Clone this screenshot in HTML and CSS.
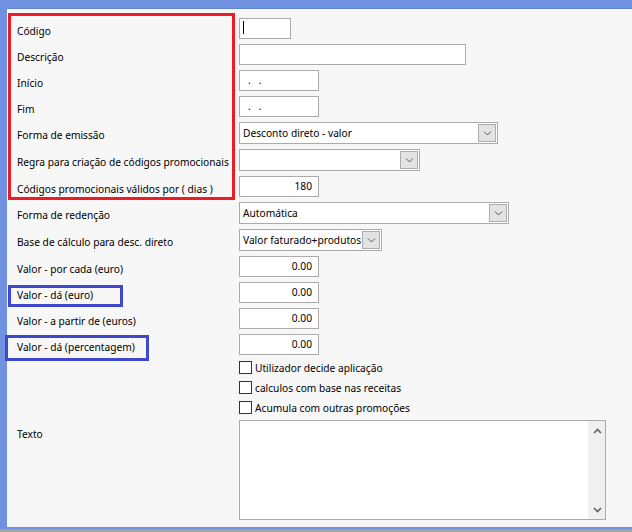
FILE: index.html
```html
<!DOCTYPE html>
<html lang="pt">
<head>
<meta charset="utf-8">
<title>Promoção</title>
<link rel="stylesheet" href="styles.css">
</head>
<body>
<div class="frame">
  <div class="panel">
    <div class="form">
      <div class="row">
        <span class="label">Código</span>
        <div class="input w-code"><span class="caret"></span></div>
      </div>
      <div class="row">
        <span class="label">Descrição</span>
        <div class="input w-desc"></div>
      </div>
      <div class="row">
        <span class="label">Início</span>
        <div class="input w-short date"><span class="dot">.</span><span class="dot">.</span></div>
      </div>
      <div class="row">
        <span class="label">Fim</span>
        <div class="input w-short date"><span class="dot">.</span><span class="dot">.</span></div>
      </div>
      <div class="row tall">
        <span class="label">Forma de emissão</span>
        <div class="select w-emissao">
          <span class="select-text">Desconto direto - valor</span>
          <span class="select-btn"><svg width="9" height="5" viewBox="0 0 9 5"><path d="M1 0.5 L4.5 4 L8 0.5" fill="none" stroke="#555" stroke-width="1"/></svg></span>
        </div>
      </div>
      <div class="row tall">
        <span class="label">Regra para criação de códigos promocionais</span>
        <div class="select w-regra">
          <span class="select-text"></span>
          <span class="select-btn"><svg width="9" height="5" viewBox="0 0 9 5"><path d="M1 0.5 L4.5 4 L8 0.5" fill="none" stroke="#555" stroke-width="1"/></svg></span>
        </div>
      </div>
      <div class="row">
        <span class="label">Códigos promocionais válidos por ( dias )</span>
        <div class="input w-short num">180</div>
      </div>
      <div class="row tall">
        <span class="label">Forma de redenção</span>
        <div class="select w-redencao">
          <span class="select-text">Automática</span>
          <span class="select-btn"><svg width="9" height="5" viewBox="0 0 9 5"><path d="M1 0.5 L4.5 4 L8 0.5" fill="none" stroke="#555" stroke-width="1"/></svg></span>
        </div>
      </div>
      <div class="row tall">
        <span class="label">Base de cálculo para desc. direto</span>
        <div class="select w-base">
          <span class="select-text">Valor faturado+produtos</span>
          <span class="select-btn"><svg width="9" height="5" viewBox="0 0 9 5"><path d="M1 0.5 L4.5 4 L8 0.5" fill="none" stroke="#555" stroke-width="1"/></svg></span>
        </div>
      </div>
      <div class="row">
        <span class="label">Valor - por cada (euro)</span>
        <div class="input w-short num">0.00</div>
      </div>
      <div class="row">
        <span class="label">Valor - dá (euro)</span>
        <div class="input w-short num">0.00</div>
      </div>
      <div class="row">
        <span class="label">Valor - a partir de (euros)</span>
        <div class="input w-short num">0.00</div>
      </div>
      <div class="row last">
        <span class="label">Valor - dá (percentagem)</span>
        <div class="input w-short num">0.00</div>
      </div>
    </div>

    <div class="checks">
      <div class="check"><span class="box"></span><span class="check-label">Utilizador decide aplicação</span></div>
      <div class="check"><span class="box"></span><span class="check-label">calculos com base nas receitas</span></div>
      <div class="check"><span class="box"></span><span class="check-label">Acumula com outras promoções</span></div>
    </div>

    <div class="text-row">
      <span class="label text-label">Texto</span>
      <div class="textarea">
        <div class="scroll">
          <svg width="9" height="6" viewBox="0 0 9 6"><path d="M1 5 L4.5 1.5 L8 5" fill="none" stroke="#606060" stroke-width="1.6"/></svg>
          <svg width="9" height="6" viewBox="0 0 9 6"><path d="M1 1 L4.5 4.5 L8 1" fill="none" stroke="#606060" stroke-width="1.6"/></svg>
        </div>
      </div>
    </div>
  </div>

  <div class="mark mark-red"></div>
  <div class="mark mark-blue1"></div>
  <div class="mark mark-blue2"></div>
</div>
</body>
</html>
```
FILE: styles.css
```css
* {
  box-sizing: border-box;
}

html,
body {
  margin: 0;
  padding: 0;
}

body {
  width: 632px;
  height: 532px;
  overflow: hidden;
  font-family: "Noto Sans", "Liberation Sans", sans-serif;
  font-size: 10.2px;
  color: #000;
}

.frame {
  position: relative;
  height: 532px;
  background: #7090e0;
  padding: 8px 0 2px 7px;
  border-bottom: 3px solid #a3a3a3;
}

.panel {
  height: 100%;
  background: #f7f7f7;
  border-top: 1px solid #6383d6;
  padding: 9px 0 0 10px;
}

.row {
  display: flex;
  height: 26px;
}

.row.tall {
  height: 27px;
}

.row.last {
  height: 24px;
}

.label {
  flex: none;
  width: 222px;
  line-height: 21px;
  padding-top: 3px;
  white-space: nowrap;
}

.input {
  flex: none;
  height: 21px;
  border: 1px solid #ababab;
  background: #fff;
  line-height: 19px;
  padding: 0 3px;
  white-space: pre;
}

.num {
  text-align: right;
  padding-right: 6px;
}

.date {
  padding-left: 8px;
}

.dot {
  margin-right: 8px;
}

.caret {
  display: block;
  width: 1px;
  height: 13px;
  margin-top: 2px;
  background: #000;
}

.w-code { width: 52px; }
.w-desc { width: 227px; }
.w-short { width: 80px; }
.w-emissao { width: 259px; }
.w-regra { width: 181px; }
.w-redencao { width: 270px; }
.w-base { width: 143px; }

.select {
  flex: none;
  display: flex;
  height: 22px;
  border: 1px solid #ababab;
  background: #fff;
  padding: 1px;
}

.select-text {
  flex: 1;
  min-width: 0;
  overflow: hidden;
  white-space: nowrap;
  padding-left: 2px;
  line-height: 18px;
}

.select-btn {
  flex: none;
  display: flex;
  align-items: center;
  justify-content: center;
  width: 18px;
  height: 18px;
  border: 1px solid #adadad;
  background: #e3e3e3;
}

.checks {
  margin-left: 222px;
}

.check {
  display: flex;
  height: 20px;
}

.box {
  flex: none;
  width: 13px;
  height: 13px;
  margin-top: 3px;
  margin-right: 3px;
  border: 1px solid #333;
  background: #fff;
}

.check-label {
  line-height: 21px;
  white-space: nowrap;
}

.text-row {
  display: flex;
  margin-top: 2px;
}

.text-label {
  padding-top: 4px;
}

.textarea {
  flex: none;
  display: flex;
  justify-content: flex-end;
  width: 367px;
  height: 100px;
  border: 1px solid #ababab;
  background: #fff;
}

.scroll {
  width: 17px;
  background: #f0f0f0;
  display: flex;
  flex-direction: column;
  justify-content: space-between;
  align-items: center;
  padding: 7px 0 6px 1px;
}

.mark {
  position: absolute;
  pointer-events: none;
}

.mark-red {
  left: 8px;
  top: 13px;
  width: 227px;
  height: 187px;
  border: 3px solid #ed1c24;
}

.mark-blue1 {
  left: 8px;
  top: 285px;
  width: 115px;
  height: 22px;
  border: 3px solid #3f48cc;
}

.mark-blue2 {
  left: 5px;
  top: 335px;
  width: 144px;
  height: 26px;
  border: 3px solid #3f48cc;
}
```
